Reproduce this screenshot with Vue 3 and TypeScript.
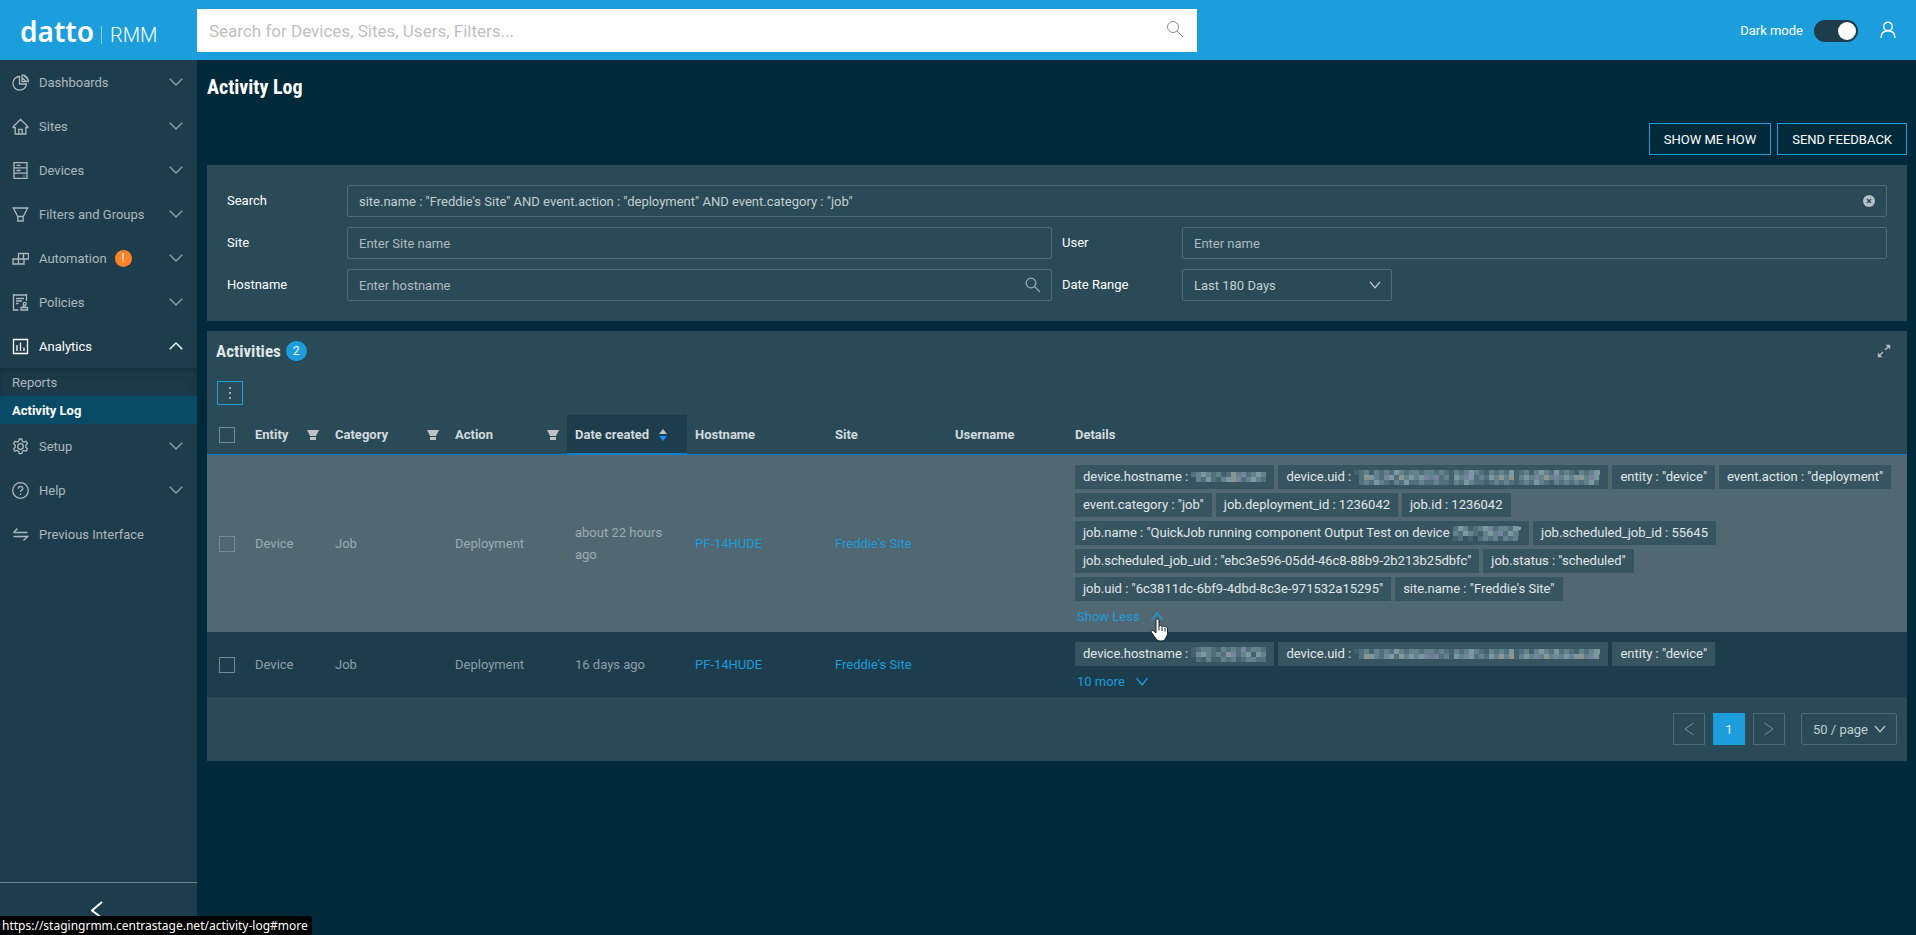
<script setup lang="ts">
import { ref } from 'vue'

interface NavItem {
  label: string
  icon: string
  alert?: boolean
  open?: boolean
  leaf?: boolean
  children?: { label: string; active?: boolean }[]
}

interface Tag {
  key: string
  text?: string
  mask?: string[]
  width?: number
  tail?: string
}

interface Activity {
  created: string
  hover: boolean
  tags: Tag[]
  toggle: string
}

const nav: NavItem[] = [
  { label: 'Dashboards', icon: 'M7.500 2.500A6.800 6.800 0 1 0 14.500 10H7.500zM10 .800v6.700h6.300A6.500 6.500 0 0 0 10 .800M10 3.500l4 4M12 1.500l4 4' },
  { label: 'Sites', icon: 'M.500 9.500h2.800M16.500 9.500h-2.800M.900 9 8.500 1.400 16.100 9M3.200 9v7h10.600V9M6.800 16v-4.600h3.400V16' },
  { label: 'Devices', icon: 'M2 .700h13v15.800H2zM2 5.800h13M2 11.200h13M4.500 3.300h4M4.500 8.500h4M11.500 14h1' },
  { label: 'Filters and Groups', icon: 'M1.300 2h14.400l-4.500 8.500H5.800zM5.800 10.500v4.500h5.400v-4.500' },
  { label: 'Automation', icon: 'M6.500 3.500h10v5.500h-10zM11.500 3.500V9M1 9h11v5H1zM6.500 9v5', alert: true },
  { label: 'Policies', icon: 'M6.500 16H1.500V1h13v6M4 4.500h8M4 7h6M4 9.500h2.500M9 16v-2.500h6.500V16zM11 13.300l.5-2.300M13.400 13.300l-.5-2.300M12.200 11a1.400 1.400 0 1 0 0-2.600 1.400 1.400 0 0 0 0 2.600' },
  {
    label: 'Analytics',
    icon: 'M1.500 1.500h14v14h-14zM5 7v6M8.500 4.500V13M12 9.500V13',
    open: true,
    children: [{ label: 'Reports' }, { label: 'Activity Log', active: true }],
  },
  { label: 'Setup', icon: 'M7.200 1h2.600l.5 2.200 1.600.9 2.200-.7 1.300 2.300-1.600 1.600v2l1.600 1.600-1.300 2.300-2.200-.7-1.600.9-.5 2.200H7.200l-.5-2.200-1.600-.9-2.200.7-1.300-2.300 1.600-1.600v-2L1.600 5.700l1.300-2.300 2.200.7 1.600-.9zM8.500 5.700a2.800 2.800 0 1 0 0 5.600 2.800 2.800 0 0 0 0-5.600' },
  { label: 'Help', icon: 'M8.500.7a7.800 7.800 0 1 0 0 15.600 7.800 7.800 0 0 0 0-15.600M6.300 6.700c0-3 4.500-2.900 4.500-.2 0 1.700-2.300 1.800-2.300 3.500M8.500 11.500v1.500' },
  { label: 'Previous Interface', icon: 'M1.500 6.500h14M1.500 6.500l4-4M1.500 10.500h14l-4 4', leaf: true },
]

const shades: Record<string, string> = {
  a: '#42626c',
  b: '#50717b',
  c: '#64828b',
  d: '#7b979f',
  e: '#77839f',
  f: '#8a968f',
}

const uidMask = [
  'abcacbcbdcbccbccbcbacbcdcbacbcbdabcacdcbdbcbacbcdf',
  '.bfdcbedbfcdcdecebcadcedbcbdcfcfacdcecfcecdcdfceda',
  '.bcbdcbacbdbbcbbcbbacbdcbbabcbcbabcbdcbacbcbcbcdb.',
]
const hostMask = ['bcdcbcabfcebcdcf', '.cbdbacdfebcdcb.']
const hostMaskTwo = ['abccbacbcbebccbf', 'aedcbcbfebcdadc.', '.bacaacbcabccbb.']
const jobMask = ['bdcabcdebccbde', 'cbdcbacdcebdcb', 'ab.a.bcbcacbc.']

const activities: Activity[] = [
  {
    created: 'about 22 hours ago',
    hover: true,
    toggle: 'Show Less',
    tags: [
      { key: 'device.hostname', mask: hostMask, width: 75 },
      { key: 'device.uid', mask: uidMask, width: 246 },
      { key: 'entity', text: '"device"' },
      { key: 'event.action', text: '"deployment"' },
      { key: 'event.category', text: '"job"' },
      { key: 'job.deployment_id', text: '1236042' },
      { key: 'job.id', text: '1236042' },
      { key: 'job.name', text: '"QuickJob running component Output Test on device ', mask: jobMask, width: 66, tail: "'" },
      { key: 'job.scheduled_job_id', text: '55645' },
      { key: 'job.scheduled_job_uid', text: '"ebc3e596-05dd-46c8-88b9-2b213b25dbfc"' },
      { key: 'job.status', text: '"scheduled"' },
      { key: 'job.uid', text: '"6c3811dc-6bf9-4dbd-8c3e-971532a15295"' },
      { key: 'site.name', text: '"Freddie\'s Site"' },
    ],
  },
  {
    created: '16 days ago',
    hover: false,
    toggle: '10 more',
    tags: [
      { key: 'device.hostname', mask: hostMaskTwo, width: 75 },
      { key: 'device.uid', mask: uidMask.slice(0, 2), width: 246 },
      { key: 'entity', text: '"device"' },
    ],
  },
]

const search = ref(`site.name : "Freddie's Site" AND event.action : "deployment" AND event.category : "job"`)
const darkMode = ref(true)
const selected = ref<number[]>([])
</script>

<template>
  <div class="app">
    <header class="topbar">
      <a class="brand" href="#"><span class="brand-name">datto</span><span class="brand-product">RMM</span></a>
      <div class="global-search">
        <input type="text" aria-label="Search" placeholder="Search for Devices, Sites, Users, Filters..." />
        <svg width="18" height="18" viewBox="0 0 18 18"><circle cx="7" cy="7" r="5.500" /><path d="m11 11 6 6" /></svg>
      </div>
      <div class="top-right">
        <label for="dark">Dark mode</label>
        <input id="dark" v-model="darkMode" class="switch" type="checkbox" role="switch" />
        <button class="icon-btn" aria-label="Account">
          <svg width="18" height="18" viewBox="0 0 18 18"><circle cx="9" cy="5.500" r="4.300" /><path d="M2 17c0-4.500 2.500-7.200 7-7.200s7 2.700 7 7.200" /></svg>
        </button>
      </div>
    </header>

    <div class="body">
      <aside class="sidebar">
        <nav>
          <template v-for="item in nav" :key="item.label">
            <button class="nav-item" :class="{ open: item.open }">
              <svg class="nav-icon" width="17" height="17" viewBox="0 0 17 17"><path :d="item.icon" /></svg>
              <span>{{ item.label }}</span>
              <span v-if="item.alert" class="alert">!</span>
              <svg v-if="!item.leaf" class="chev" width="14" height="8" viewBox="0 0 14 8">
                <path :d="item.open ? 'M.700 7.300 7 1l6.300 6.300' : 'M.700.700 7 7 13.300.700'" />
              </svg>
            </button>
            <div v-if="item.children" class="submenu">
              <a v-for="c in item.children" :key="c.label" href="#" :class="{ active: c.active }">{{ c.label }}</a>
            </div>
          </template>
        </nav>
        <button class="collapse" aria-label="Collapse menu">
          <svg width="12" height="18" viewBox="0 0 12 18"><path d="M11 1 1 9.500 11 17" /></svg>
        </button>
      </aside>

      <main>
        <h1>Activity Log</h1>
        <div class="page-actions">
          <button>SHOW ME HOW</button>
          <button>SEND FEEDBACK</button>
        </div>

        <form class="panel filters" @submit.prevent>
          <div class="field wide">
            <label for="q">Search</label>
            <div class="control">
              <input id="q" v-model="search" type="text" />
              <button type="button" class="clear" aria-label="Clear" @click="search = ''">
                <svg width="12" height="12" viewBox="0 0 12 12"><circle cx="6" cy="6" r="6" /><path d="m4 4 4 4M8 4 4 8" /></svg>
              </button>
            </div>
          </div>
          <div class="field">
            <label for="site">Site</label>
            <div class="control"><input id="site" type="text" placeholder="Enter Site name" /></div>
          </div>
          <div class="field">
            <label for="user">User</label>
            <div class="control"><input id="user" type="text" placeholder="Enter name" /></div>
          </div>
          <div class="field">
            <label for="host">Hostname</label>
            <div class="control">
              <input id="host" type="text" placeholder="Enter hostname" />
              <svg class="stroke find" width="16" height="16" viewBox="0 0 16 16"><circle cx="6" cy="6" r="4.800" /><path d="m9.500 9.500 5.500 5.500" /></svg>
            </div>
          </div>
          <div class="field">
            <label for="range">Date Range</label>
            <div class="control short">
              <select id="range"><option>Last 180 Days</option></select>
              <svg class="stroke" width="12" height="8" viewBox="0 0 12 8"><path d="m1 .800 5 6 5-6" /></svg>
            </div>
          </div>
        </form>

        <section class="panel">
          <div class="panel-head">
            <h2>Activities</h2>
            <span class="count">2</span>
            <button class="icon-btn expand" aria-label="Expand">
              <svg width="14" height="14" viewBox="0 0 14 14"><path class="solid" d="M8.500.800H13.200V5.500zM.800 8.500v4.700H5.500z" /><path d="m11.500 2.500-3.500 3.500M6 8l-3.500 3.500" /></svg>
            </button>
          </div>
          <button class="more" aria-label="Actions"><i></i><i></i><i></i></button>

          <table>
            <colgroup>
              <col class="w40" /><col class="w80" /><col class="w120" /><col class="w120" /><col class="w120" />
              <col class="w140" /><col class="w120" /><col class="w120" /><col />
            </colgroup>
            <thead>
              <tr>
                <th class="check"><input type="checkbox" aria-label="Select all" /></th>
                <th v-for="h in ['Entity', 'Category', 'Action']" :key="h">
                  <div class="th-in">
                    {{ h }}
                    <svg width="12" height="10" viewBox="0 0 12 10"><path class="funnel" d="M0 0h12L9 6H3zM3 7h6v3H3z" /></svg>
                  </div>
                </th>
                <th class="sorted">
                  <div class="th-sort">
                    Date created
                    <svg width="8" height="12" viewBox="0 0 8 12"><path class="up" d="M4 0 8 5H0z" /><path class="down" d="M0 7h8l-4 5z" /></svg>
                  </div>
                </th>
                <th>Hostname</th>
                <th>Site</th>
                <th>Username</th>
                <th>Details</th>
              </tr>
            </thead>
            <tbody>
              <tr v-for="(a, i) in activities" :key="i" :class="{ hover: a.hover }">
                <td class="check"><input v-model="selected" :value="i" type="checkbox" :aria-label="'Select row ' + (i + 1)" /></td>
                <td>Device</td>
                <td>Job</td>
                <td>Deployment</td>
                <td>{{ a.created }}</td>
                <td><a href="#">PF-14HUDE</a></td>
                <td><a href="#">Freddie's Site</a></td>
                <td></td>
                <td class="details">
                  <div class="tags">
                    <span v-for="t in a.tags" :key="t.key" class="tag">
                      <span>{{ t.key }} : {{ t.text }}</span>
                      <svg v-if="t.mask" :width="t.width" :height="t.mask.length * 5" shape-rendering="crispEdges">
                        <template v-for="(line, r) in t.mask" :key="r">
                          <template v-for="(ch, c) in line" :key="c">
                            <rect v-if="ch !== '.'" :x="c * 5" :y="r * 5" width="5" height="5" :fill="shades[ch]" />
                          </template>
                        </template>
                      </svg>
                      <span v-if="t.tail">{{ t.tail }}</span>
                    </span>
                  </div>
                  <a class="toggle" href="#more">
                    {{ a.toggle }}
                    <svg width="12" height="9" viewBox="0 0 12 9"><path :d="a.hover ? 'M.500 8 6 1l5.500 7' : 'M.500 1 6 8l5.500-7'" /></svg>
                    <svg v-if="a.hover" class="pointer" width="20" height="24" viewBox="0 0 20 24">
                      <path d="M6 2.500c0-2 3-2 3 0v6c.3-1.400 2.800-1.300 3 .2.500-1.200 2.800-1 2.900.5.500-1 2.600-.700 2.600.9v5.400c0 2-1.500 3.500-2 4.800-.8 2.200-1.700 2.700-4.500 2.700s-4-.5-5-2.200L1.500 14.500c-1-1.900 1-2.900 2.300-1.500L6 15z" />
                      <path d="M9 8.500v4M12 9v4M15 10v3.500" />
                    </svg>
                  </a>
                </td>
              </tr>
            </tbody>
          </table>

          <div class="pager">
            <button disabled aria-label="Previous page"><svg width="10" height="14" viewBox="0 0 10 14"><path d="M9.500 1 1 7l8.500 6" /></svg></button>
            <button class="current">1</button>
            <button disabled aria-label="Next page"><svg width="10" height="14" viewBox="0 0 10 14"><path d="M.500 1 9 7 .500 13" /></svg></button>
            <div class="control page-size">
              <select aria-label="Page size"><option>50 / page</option></select>
              <svg class="stroke" width="12" height="8" viewBox="0 0 12 8"><path d="m1 .800 5 6 5-6" /></svg>
            </div>
          </div>
        </section>
      </main>
    </div>

    <div class="status">https://stagingrmm.centrastage.net/activity-log#more</div>
  </div>
</template>

<style>
body {
  background: #002a3a;
}
</style>

<style scoped>
.app,
.app * {
  box-sizing: border-box;
}
.app {
  display: flex;
  flex-direction: column;
  min-height: 100vh;
  background: #002a3a;
  color: #fff;
  font-family: Roboto, 'Liberation Sans', sans-serif;
  font-size: 13px;
}
button,
input,
select {
  font: inherit;
  color: inherit;
  border: 0;
  margin: 0;
  padding: 0;
  background: none;
}
a {
  color: #1c9cdc;
  text-decoration: none;
}
svg {
  display: block;
  fill: none;
  stroke: currentColor;
  flex: none;
}

.topbar {
  display: flex;
  height: 60px;
  background: #1b9edb;
}
.brand {
  display: flex;
  align-items: baseline;
  width: 197px;
  padding: 13px 0 0 20px;
  color: #fff;
  line-height: 36px;
}
.brand-name {
  font-family: 'Noto Sans', sans-serif;
  font-size: 28px;
  font-weight: 600;
  padding-right: 7px;
}
.brand-product {
  font-family: Roboto, sans-serif;
  font-size: 20px;
  font-weight: 300;
  line-height: 18px;
  border-left: 1px solid #8fd0f0;
  padding-left: 8px;
}
.global-search {
  display: flex;
  align-items: center;
  width: 1000px;
  height: 43px;
  margin-top: 9px;
  padding: 0 13px 0 12px;
  background: #fff;
  color: #888;
}
.global-search input {
  flex: 1;
  height: 100%;
  color: #333;
  font-size: 17px;
}
.global-search input::placeholder {
  color: #bfbfbf;
}
.global-search svg {
  margin-bottom: 4px;
}
.top-right {
  display: flex;
  align-items: center;
  margin-left: auto;
  padding-right: 19px;
}
.switch {
  appearance: none;
  width: 44px;
  height: 22px;
  margin: 2px 21px 0 11px;
  border-radius: 11px;
  background: #1d3d4c;
}
.switch::before {
  content: '';
  display: block;
  width: 18px;
  height: 18px;
  margin: 2px;
  border-radius: 50%;
  background: #fff;
}
.switch:checked::before {
  margin-left: 24px;
}
.icon-btn svg {
  stroke-width: 1.4;
}

.body {
  display: flex;
  flex: 1;
}
.sidebar {
  display: flex;
  flex-direction: column;
  justify-content: space-between;
  flex: none;
  width: 197px;
  background: #1e3d4c;
  color: #adb8be;
}
.nav-item {
  display: flex;
  align-items: center;
  width: 100%;
  height: 44px;
  padding: 0 14px 0 12px;
  font-size: 13px;
}
.nav-icon {
  margin-right: 10px;
  stroke-width: 1.3;
}
.chev {
  margin-left: auto;
  color: #8b9ba3;
  stroke-width: 1.4;
}
.nav-item.open,
.open .chev {
  color: #fff;
}
.alert {
  width: 17px;
  height: 17px;
  margin: 1px 0 0 8px;
  border-radius: 50%;
  background: #ff8228;
  color: #fff;
  font-size: 12px;
  line-height: 17px;
  text-align: center;
}
.submenu {
  background: #1c3a48;
  box-shadow: inset 0 3px 6px #14303e;
}
.submenu a {
  display: block;
  padding: 2px 0 0 12px;
  line-height: 26px;
  color: #adb8be;
}
.submenu a.active {
  background: #094b66;
  color: #fff;
  font-weight: 700;
}
.collapse {
  height: 53px;
  padding: 2px 4px 0 0;
  border-top: 1px solid #6f858b;
  color: #fff;
}
.collapse svg {
  margin: 0 auto;
  stroke-width: 2;
}

main {
  flex: 1;
  min-width: 0;
  padding: 0 9px 40px 10px;
}
h1,
h2 {
  margin: 0;
  font-family: 'Roboto Condensed', Roboto, sans-serif;
  font-size: 20px;
  font-weight: 700;
}
h1 {
  line-height: 55px;
}
.page-actions {
  display: flex;
  justify-content: flex-end;
  gap: 6px;
  padding: 8px 0 10px;
}
.page-actions button {
  height: 32px;
  padding: 0 14px;
  border: 1px solid #1b9edb;
}
.panel {
  background: #294a56;
}
.filters {
  display: grid;
  grid-template-columns: 1fr 1fr;
  gap: 10px;
  margin-bottom: 10px;
  padding: 20px;
}
.field {
  display: flex;
}
.field.wide {
  grid-column: span 2;
}
.field label {
  flex: none;
  width: 120px;
  line-height: 32px;
}
.control {
  display: flex;
  align-items: center;
  flex: 1;
  height: 32px;
  padding-right: 10px;
  border: 1px solid #4f6b74;
  border-radius: 2px;
  color: #c5cfd2;
}
.control.short {
  flex: 0 0 210px;
}
.control input,
.control select {
  appearance: none;
  flex: 1;
  width: 0;
  height: 100%;
  padding-left: 11px;
  outline: 0;
}
.control input::placeholder {
  color: #b0bbbf;
}
.stroke {
  stroke-width: 1.3;
}
.find {
  color: #9aaab0;
}
.clear circle {
  fill: #b4c0c5;
  stroke: none;
}
.clear {
  margin-right: 1px;
}
.clear path {
  stroke: #294a56;
  stroke-width: 1.3;
}

.panel-head {
  display: flex;
  align-items: center;
  height: 40px;
  padding: 0 16px 0 9px;
  color: #dfe5e7;
}
h2 {
  font-size: 17px;
}
.count {
  width: 21px;
  height: 20px;
  margin-left: 5px;
  border-radius: 10px;
  background: #1b9edb;
  color: #fff;
  font-size: 12px;
  line-height: 20px;
  text-align: center;
}
.expand {
  margin-left: auto;
  color: #b4c0c5;
}
.solid {
  fill: currentColor;
  stroke: none;
}
.more {
  display: flex;
  flex-direction: column;
  align-items: center;
  justify-content: center;
  gap: 3px;
  width: 26px;
  height: 24px;
  margin: 10px;
  border: 1px solid #1b9edb;
}
.more i {
  width: 2px;
  height: 2px;
  background: #a0afb5;
}

table {
  width: 100%;
  table-layout: fixed;
  border-collapse: separate;
  border-spacing: 0;
}
.w40 {
  width: 40px;
}
.w80 {
  width: 80px;
}
.w120 {
  width: 120px;
}
.w140 {
  width: 140px;
}
th {
  height: 40px;
  padding: 0 8px;
  border-bottom: 1px solid #0a7fc9;
  color: #d3dadd;
  font-weight: 700;
  text-align: left;
}
.th-in {
  display: flex;
  align-items: center;
  justify-content: space-between;
}
.funnel {
  fill: #bfc3c5;
  stroke: none;
}
.sorted {
  background: #1d3d4c;
  box-shadow: inset 0 -1px #0a7fc9;
}
.th-sort {
  display: flex;
  align-items: center;
  gap: 10px;
}
.up {
  fill: #bfc3c5;
  stroke: none;
}
.down {
  fill: #1890ff;
  stroke: none;
}
td {
  height: 65px;
  padding: 0 8px;
  background: #1d3d4c;
  color: #8d9ea6;
  line-height: 22px;
}
.hover td {
  background: #516873;
  color: #9dacb2;
}
.check {
  padding: 0 0 0 12px;
}
.check input {
  appearance: none;
  display: block;
  width: 16px;
  height: 16px;
  border: 1px solid #768a93;
}
td.details {
  padding: 10px 8px 0;
}
.tags {
  display: flex;
  flex-wrap: wrap;
  gap: 4px;
}
.tag {
  display: flex;
  align-items: center;
  height: 24px;
  padding: 0 8px;
  background: #365560;
  color: #e2e7e9;
  white-space: pre;
}
.tag svg {
  stroke: none;
}
.toggle {
  position: relative;
  display: flex;
  align-items: center;
  gap: 11px;
  width: max-content;
  height: 31px;
  padding-left: 2px;
}
.toggle svg {
  stroke-width: 1.3;
}
.toggle .pointer {
  position: absolute;
  left: 75px;
  top: 17px;
  z-index: 1;
  fill: #fff;
  stroke: #15202b;
  stroke-width: 1;
}

.pager {
  display: flex;
  justify-content: flex-end;
  gap: 8px;
  padding: 16px 10px;
}
.pager button {
  display: flex;
  align-items: center;
  justify-content: center;
  width: 32px;
  height: 32px;
  border: 1px solid #4f6b74;
  color: #7d9199;
}
.pager .current {
  border-color: #1b9edb;
  background: #1b9edb;
  color: #e2e7e9;
}
.page-size {
  flex: 0 0 96px;
  margin-left: 8px;
}

.status {
  position: fixed;
  left: 0;
  bottom: 0;
  height: 19px;
  padding: 0 4px 0 2px;
  border-top-right-radius: 3px;
  background: #000;
  font-family: 'Noto Sans', sans-serif;
  font-size: 12px;
  line-height: 20px;
}
</style>
